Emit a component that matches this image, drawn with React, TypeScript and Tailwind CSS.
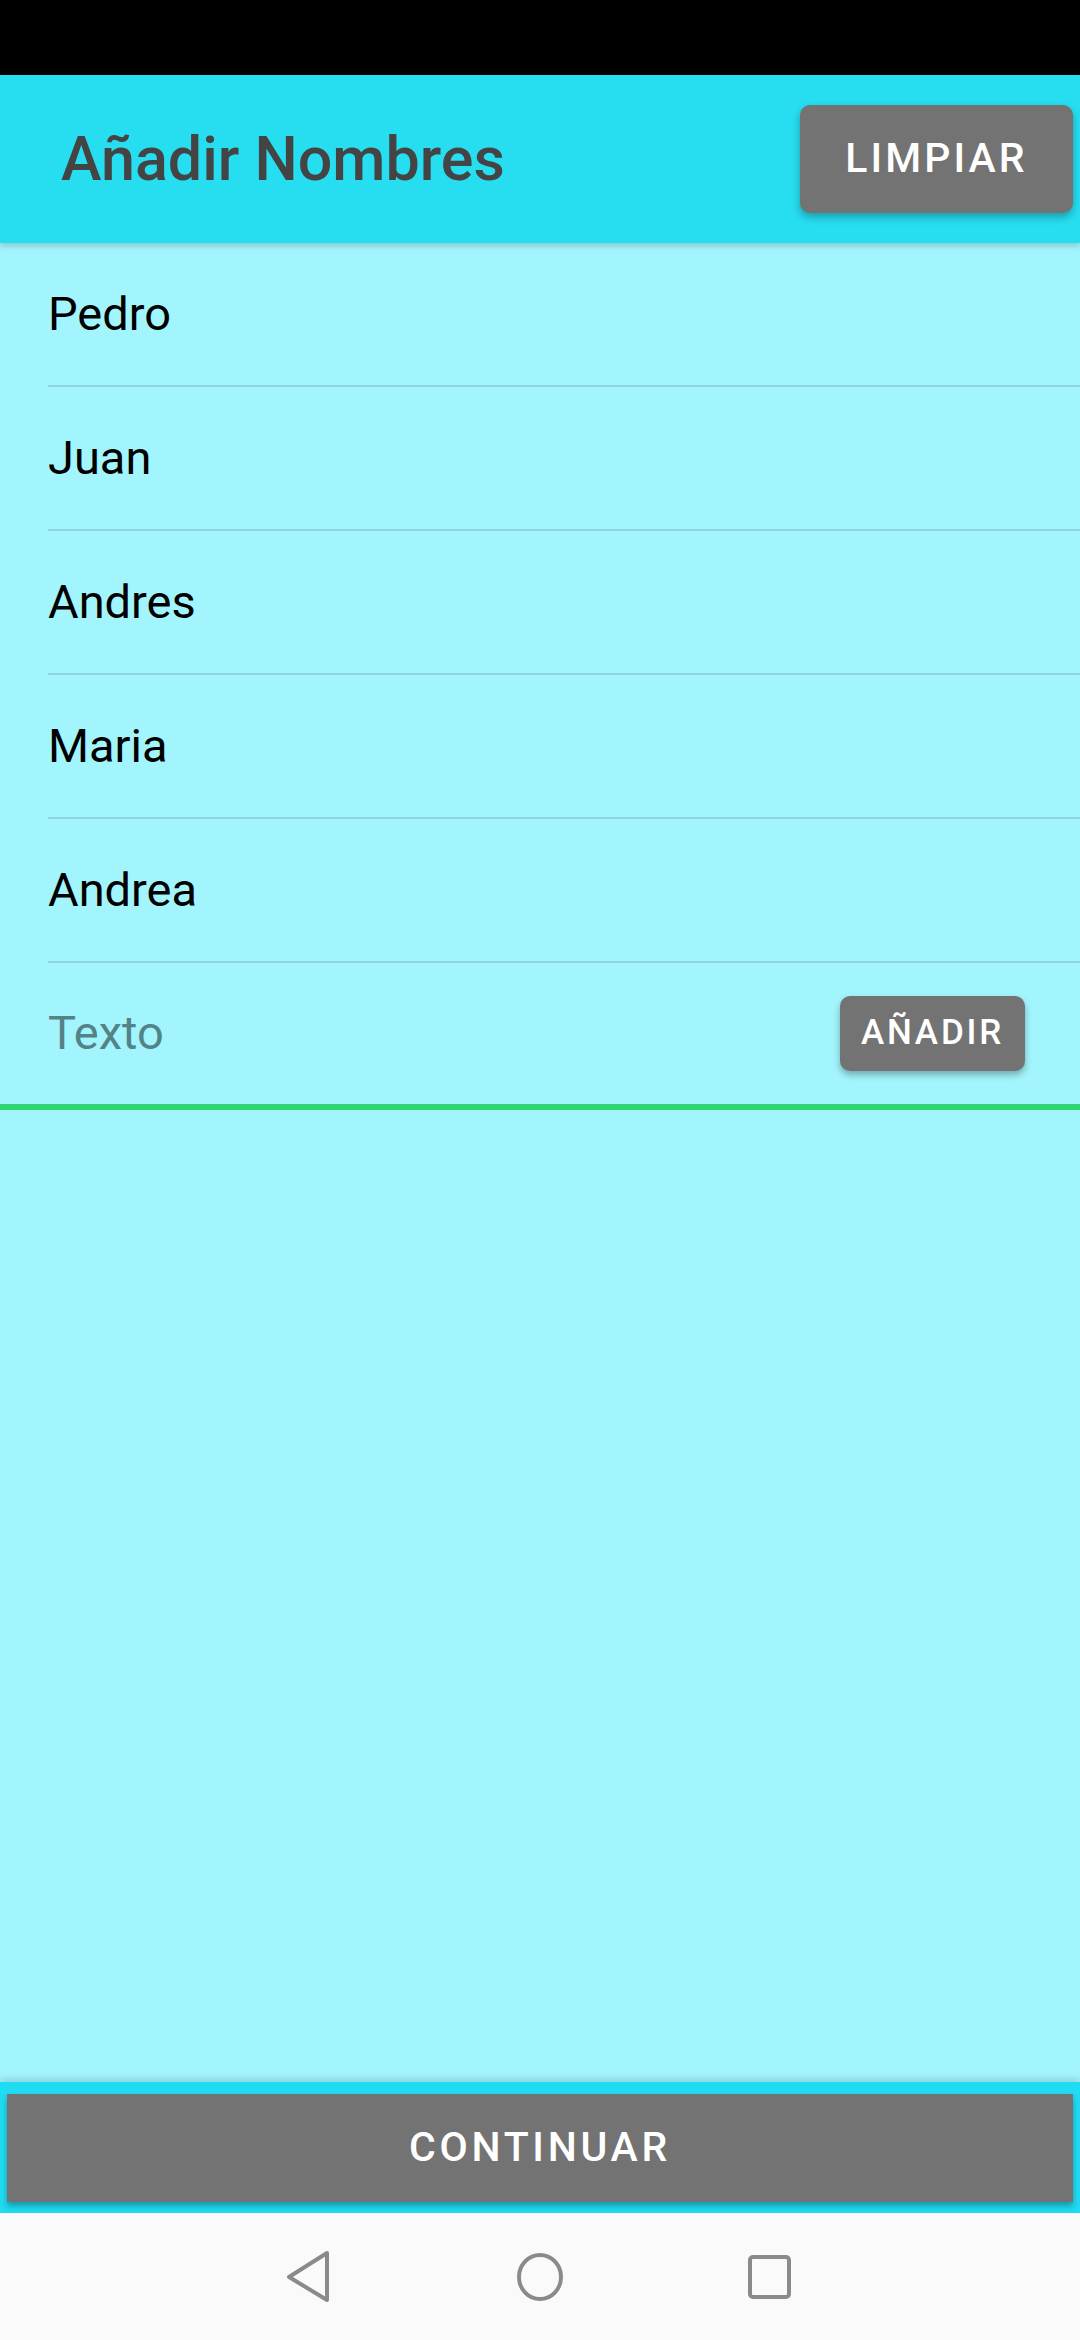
import React from "react";

const names = ["Pedro", "Juan", "Andres", "Maria", "Andrea"];

const NavBar: React.FC = () => (
  <div className="h-[127px] bg-[#fafafa] flex items-center justify-center">
    <div className="w-[230px] flex justify-center">
      <svg width="60" height="60" viewBox="0 0 60 60">
        <path
          d="M47 6 L9 30 L47 53 Z"
          fill="none"
          stroke="#8a8a8a"
          strokeWidth="4"
          strokeLinejoin="round"
        />
      </svg>
    </div>
    <div className="w-[230px] flex justify-center">
      <svg width="60" height="60" viewBox="0 0 60 60">
        <ellipse cx="30" cy="30" rx="21" ry="22" fill="none" stroke="#8a8a8a" strokeWidth="4" />
      </svg>
    </div>
    <div className="w-[230px] flex justify-center">
      <svg width="60" height="60" viewBox="0 0 60 60">
        <rect x="10" y="10" width="39" height="40" rx="3" fill="none" stroke="#8a8a8a" strokeWidth="4" />
      </svg>
    </div>
  </div>
);

export default function App() {
  return (
    <div className="w-[1080px] h-[2340px] flex flex-col bg-[#a3f5fd] font-['Roboto',sans-serif] overflow-hidden">
      {/* Status bar */}
      <div className="h-[75px] bg-black shrink-0" />

      {/* App bar */}
      <div className="h-[168px] shrink-0 bg-[#27def1] flex items-center justify-between pl-[61px] pr-[7px] relative z-10 shadow-[0_3px_6px_rgba(0,0,0,0.18)]">
        <h1 className="text-[61px] font-medium text-[#444444] leading-none">Añadir Nombres</h1>
        <button className="w-[273px] h-[108px] rounded-[10px] bg-[#737373] text-white text-[41px] font-medium tracking-[0.075em] shadow-[0_4px_8px_rgba(0,0,0,0.3)]">
          LIMPIAR
        </button>
      </div>

      {/* Names list */}
      <div className="flex flex-col">
        {names.map((name) => (
          <div
            key={name}
            className="ml-[48px] h-[144px] border-b-[2px] border-[#8fd3dc] flex items-center text-[47px] text-black"
          >
            {name}
          </div>
        ))}
      </div>

      {/* Input row */}
      <div className="h-[147px] shrink-0 border-b-[6px] border-[#2ed573] flex items-center justify-between pl-[48px] pr-[55px]">
        <span className="text-[47px] text-[#538387]">Texto</span>
        <button className="w-[185px] h-[75px] rounded-[10px] bg-[#737373] text-white text-[35px] font-medium tracking-[0.08em] shadow-[0_4px_7px_rgba(0,0,0,0.3)]">
          AÑADIR
        </button>
      </div>

      <div className="flex-1" />

      {/* Bottom action */}
      <div className="h-[131px] shrink-0 bg-[#1fdcf2] px-[7px] py-[12px] shadow-[0_-4px_6px_rgba(0,0,0,0.12)]">
        <button className="w-full h-[108px] bg-[#737373] text-white text-[41px] font-medium tracking-[0.09em] shadow-[0_4px_6px_rgba(0,0,0,0.3)]">
          CONTINUAR
        </button>
      </div>

      <NavBar />
    </div>
  );
}
